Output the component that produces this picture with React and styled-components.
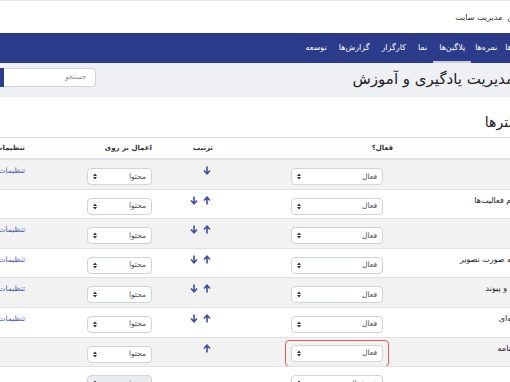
import styled, { createGlobalStyle } from "styled-components";

const GlobalStyle = createGlobalStyle`
  html, body {
    margin: 0;
    padding: 0;
    background: #fff;
  }
  body {
    font-family: "DejaVu Sans", "Noto Sans", sans-serif;
    color: #1d2125;
    overflow: hidden;
  }
`;

const Viewport = styled.div`
  width: 510px;
  height: 382px;
  overflow: hidden;
`;

/* the page is wider than the window: it runs off on both sides */
const Page = styled.div`
  direction: rtl;
  width: 610px;
  margin-left: -30px;
`;

const TopBar = styled.div`
  height: 33px;
  border-top: 1px solid #e6e6e6;
  box-sizing: border-box;
  display: flex;
  align-items: center;
  font-size: 8px;
  color: #333;
`;

const TopLink = styled.span`
  margin-left: ${(p) => p.$gap ?? 10}px;
  white-space: nowrap;
`;

const NavBar = styled.nav`
  height: 30px;
  background: #2d3b8b;
  display: flex;
  align-items: stretch;
  padding-right: 10px;
`;

const NavItem = styled.a`
  display: flex;
  align-items: center;
  padding: 0 ${(p) => p.$pad ?? 6}px;
  font-size: 8px;
  color: #fff;
  border-bottom: 2px solid ${(p) => (p.$active ? "#c8cbd6" : "transparent")};
  box-sizing: border-box;
  white-space: nowrap;
`;

const HeaderBand = styled.div`
  height: 34px;
  background: #eff0f4;
  display: flex;
  justify-content: space-between;
  align-items: center;
  padding: 0 66px 0 14px;
`;

const SiteTitle = styled.h1`
  margin: -3px 0 0;
  font-size: 15px;
  font-weight: normal;
  color: #1d2125;
  white-space: nowrap;
`;

const SearchGroup = styled.div`
  display: flex;
  direction: ltr;
  height: 19px;
  margin-top: -6px;
`;

const SearchButton = styled.div`
  width: 20px;
  background: #2d3b8b;
  border-radius: 3px 0 0 3px;
`;

const SearchInput = styled.div`
  width: 92px;
  box-sizing: border-box;
  border: 1px solid #ced4da;
  border-left: none;
  border-radius: 0 4px 4px 0;
  background: #fff;
  display: flex;
  align-items: center;
  justify-content: flex-end;
  padding-right: 9px;
  font-size: 7px;
  color: #8a8f95;
`;

const Section = styled.div`
  padding-top: 17px;
`;

const Heading = styled.h2`
  margin: 0 0 7px;
  padding-right: 56px;
  font-size: 14px;
  font-weight: normal;
  color: #1d2125;
  white-space: nowrap;
`;

const Row = styled.div`
  display: grid;
  grid-template-columns: 183px 180px 61px 127px 1fr;
  height: ${(p) => (p.$head ? "22px" : "29.6px")};
  box-sizing: border-box;
  border-top: 1px solid #dee2e6;
  border-bottom: ${(p) => (p.$head ? "1px solid #dee2e6" : "none")};
  background: ${(p) => (p.$striped ? "#f2f2f2" : "#fff")};
`;

const Cell = styled.div`
  padding: ${(p) => (p.$head ? "4px 4px 0" : "5px 4px 0")};
  font-size: ${(p) => (p.$head ? "7px" : "8px")};
  font-weight: ${(p) => (p.$head ? "bold" : "normal")};
  color: ${(p) => (p.$head ? "#333" : "#1d2125")};
  white-space: nowrap;
  overflow: hidden;
  line-height: 12px;
`;

const NameCell = styled(Cell)`
  padding-right: 12px;
`;

const Select = styled.div`
  width: ${(p) => p.$w}px;
  height: 17px;
  margin: 3px ${(p) => p.$mr || 0}px 0 0;
  box-sizing: border-box;
  border: 1px solid #ced4da;
  border-radius: 4px;
  background: ${(p) => (p.$disabled ? "#e9ecef" : "#fff")};
  display: flex;
  align-items: center;
  justify-content: space-between;
  padding: 0 5px;
  font-size: 7.5px;
  color: ${(p) => (p.$disabled ? "#8a8f95" : "#495057")};
`;

const Highlight = styled.div`
  display: inline-block;
  margin: -3px 4px 0 0;
  padding: 4px 5px;
  border: 1.5px solid #e5585c;
  border-radius: 4px;

  & > div {
    margin: 0;
  }
`;

const Arrows = styled.div`
  display: flex;
  gap: 5px;
  padding-top: 1px;
  padding-right: 2px;
`;

const SettingsLink = styled.a`
  color: #4a5aa8;
  font-size: 7.5px;
  text-decoration: none;
`;

const Caret = () => (
  <svg width="4" height="7" viewBox="0 0 4 7">
    <path d="M0 3 L2 0.5 L4 3 Z M0 4 L2 6.5 L4 4 Z" fill="#333" />
  </svg>
);

const Arrow = ({ up }) => (
  <svg width="8" height="9" viewBox="0 0 8 9" style={{ transform: up ? "none" : "rotate(180deg)" }}>
    <path d="M4 8.5 V1.5 M1 4.5 L4 1.2 L7 4.5" stroke="#3f4f9e" strokeWidth="1.6" fill="none" />
  </svg>
);

const filters = [
  { name: "MathJax", up: false, down: true, settings: true },
  { name: "پیوند خودکار به نام فعالیت‌ها", up: true, down: true, settings: false },
  { name: "HTML tidy", up: true, down: true, settings: true },
  { name: "نمایش شکلک‌ها به صورت تصویر", up: true, down: true, settings: true },
  { name: "نشانی‌ها به عکس و پیوند", up: true, down: true, settings: true },
  { name: "افزونه‌ی چندرسانه‌ای", up: true, down: true, settings: true },
  { name: "پیوند خودکار واژه‌نامه", up: true, down: false, settings: false, mark: true },
];

function StateSelect({ label, mark }) {
  const box = (
    <Select $w={92} $mr={mark ? 0 : 10}>
      <span>{label}</span>
      <Caret />
    </Select>
  );
  return mark ? <Highlight>{box}</Highlight> : box;
}

export default function App() {
  return (
    <Viewport>
      <GlobalStyle />
      <Page>
        <TopBar>
          <TopLink $gap={6}>میز کار</TopLink>
          <TopLink $gap={5}>درس‌های من</TopLink>
          <TopLink>مدیریت سایت</TopLink>
        </TopBar>
        <NavBar>
          <NavItem>کاربران</NavItem>
          <NavItem $pad={4}>درس‌ها</NavItem>
          <NavItem $pad={4}>نمره‌ها</NavItem>
          <NavItem $active>پلاگین‌ها</NavItem>
          <NavItem>نما</NavItem>
          <NavItem>کارگزار</NavItem>
          <NavItem>گزارش‌ها</NavItem>
          <NavItem>توسعه</NavItem>
        </NavBar>
        <HeaderBand>
          <SiteTitle>مدیریت یادگیری و آموزش</SiteTitle>
          <SearchGroup>
            <SearchButton />
            <SearchInput>جستجو</SearchInput>
          </SearchGroup>
        </HeaderBand>
        <Section>
          <Heading>فیلترها</Heading>
          <Row $head>
            <Cell $head />
            <Cell $head>فعال؟</Cell>
            <Cell $head>ترتیب</Cell>
            <Cell $head>اعمال بر روی</Cell>
            <Cell $head>تنظیمات</Cell>
          </Row>
          {filters.map((f, i) => (
            <Row key={f.name} $striped={i % 2 === 0}>
              <NameCell>{f.name}</NameCell>
              <Cell>
                <StateSelect label="فعال" mark={f.mark} />
              </Cell>
              <Cell>
                <Arrows>
                  {f.up && <Arrow up />}
                  {f.down && <Arrow />}
                </Arrows>
              </Cell>
              <Cell>
                <Select $w={65}>
                  <span>محتوا</span>
                  <Caret />
                </Select>
              </Cell>
              <Cell>{f.settings && <SettingsLink>تنظیمات</SettingsLink>}</Cell>
            </Row>
          ))}
          <Row>
            <NameCell>تکثیر ایمیل</NameCell>
            <Cell>
              <Select $w={92} $mr={10}>
                <span>غیر فعال</span>
                <Caret />
              </Select>
            </Cell>
            <Cell />
            <Cell>
              <Select $w={65} $disabled>
                <span>محتوا</span>
                <Caret />
              </Select>
            </Cell>
            <Cell />
          </Row>
        </Section>
      </Page>
    </Viewport>
  );
}
